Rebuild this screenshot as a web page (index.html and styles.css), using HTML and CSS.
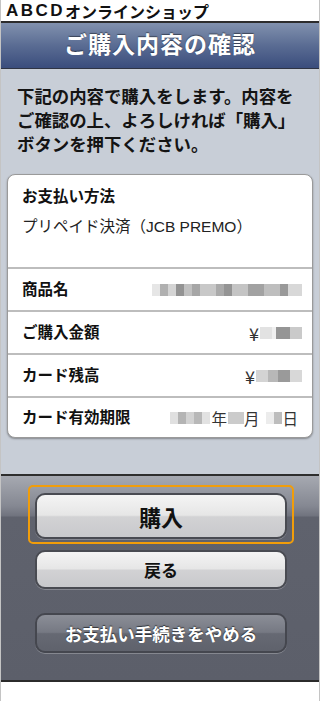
FILE: index.html
```html
<!DOCTYPE html>
<html lang="ja">
<head>
    <meta charset="UTF-8">
    <meta name="viewport" content="width=device-width, initial-scale=1.0">
    <title>ご購入内容の確認</title>
    <link rel="stylesheet" href="styles.css">
</head>
<body>
    <div id="page">
        <div class="site"><span class="abcd">ABCD</span><span class="shop">オンラインショップ</span></div>
        <h1 class="title">ご購入内容の確認</h1>

        <div class="main">
            <p class="lead">下記の内容で購入をします。内容をご確認の上、よろしければ「購入」ボタンを押下ください。</p>

            <div class="card">
                <div class="row first">
                    <div class="label">お支払い方法</div>
                    <div class="method">プリペイド決済（JCB PREMO）</div>
                </div>
                <div class="row">
                    <span class="label">商品名</span>
                    <span class="blur name"></span>
                </div>
                <div class="row">
                    <span class="label">ご購入金額</span>
                    <span class="val"><span class="yen">¥</span><span class="blur price"></span></span>
                </div>
                <div class="row">
                    <span class="label">カード残高</span>
                    <span class="val"><span class="yen">¥</span><span class="blur balance"></span></span>
                </div>
                <div class="row last">
                    <span class="label">カード有効期限</span>
                    <span class="val date"><span class="blur yy"></span>年<span class="blur mm"></span>月<span class="blur dd"></span>日</span>
                </div>
            </div>
        </div>

        <div class="actions">
            <div class="focus">
                <button class="btn big">購入</button>
            </div>
            <button class="btn back">戻る</button>
            <button class="btn dark">お支払い手続きをやめる</button>
        </div>

        <div class="foot"></div>
    </div>
</body>
</html>
```

FILE: styles.css
```css
*{
    margin: 0;
    padding: 0;
    box-sizing: border-box;
}
body{
    font-family: "Liberation Sans", "Noto Sans CJK JP", sans-serif;
    color: #111;
    background: #fff;
}
#page{
    width: 320px;
    border-left: 1px solid #c4c4c4;
    border-right: 1px solid #c4c4c4;
}

.site{
    display: flex;
    align-items: center;
    height: 23px;
    padding-left: 5px;
    font-weight: bold;
    background: #fff;
    border-bottom: 2px solid #2c2c2c;
}
.abcd{
    font-size: 17px;
    letter-spacing: 2.5px;
}
.shop{
    font-family: "Noto Sans CJK JP", sans-serif;
    font-size: 16px;
    line-height: 22px;
}
.title{
    height: 46px;
    line-height: 45px;
    text-align: center;
    color: #fff;
    font-size: 23px;
    font-weight: bold;
    letter-spacing: 1px;
    text-shadow: 0 -1px 1px rgba(0,0,0,.45);
    background: linear-gradient(#8191ae, #5a6c93 50%, #3a4d7d);
    border-bottom: 1px solid #2f3444;
}

.main{
    background: #c8ced7;
    padding: 16px 6px 36px;
}
.lead{
    margin: 0 10px;
    font-size: 17.4px;
    line-height: 24px;
    font-weight: bold;
    color: #141414;
}
.card{
    margin-top: 17px;
    background: #fff;
    border: 1px solid #9a9a9a;
    border-radius: 8px;
    box-shadow: 0 1px 2px rgba(0,0,0,.35);
    overflow: hidden;
}
.row{
    height: 43px;
    padding: 0 14px;
    border-top: 2px solid #bdbdbd;
    display: flex;
    align-items: center;
    justify-content: space-between;
    font-size: 15.5px;
}
.row.first{
    height: 92px;
    border-top: none;
    display: block;
    padding-top: 11px;
}
.row.last{
    height: 41px;
}
.label{
    font-weight: bold;
    line-height: 22px;
}
.method{
    margin-top: 8px;
    line-height: 22px;
    color: #222;
}
.val{
    display: flex;
    align-items: center;
    color: #333;
}
.yen{
    font-family: "Noto Sans CJK JP", sans-serif;
    font-size: 18px;
    line-height: 20px;
    margin-right: 1px;
}

.blur{
    display: inline-block;
    height: 12px;
    filter: blur(0.6px);
}
.name{
    width: 150px;
    margin-right: -4px;
    background: linear-gradient(90deg, #e6e6e6 0 8px, #b0b0b0 8px 16px, #d4d4d4 16px 24px, #939393 24px 32px,
        #c0c0c0 32px 40px, #a6a6a6 40px 48px, #c8c8c8 48px 64px, #aaa 64px 72px, #949494 72px 80px,
        #c4c4c4 80px 96px, #a2a2a2 96px 112px, #bebebe 112px 128px, #999 128px 136px, #d8d8d8 136px 150px);
}
.price{
    width: 42px;
    margin-right: -4px;
    background: linear-gradient(90deg, #e2e2e2 0 12px, #f0f0f0 12px 16px, #959595 16px 30px, #cacaca 30px 42px);
}
.balance{
    width: 46px;
    margin-right: -4px;
    background: linear-gradient(90deg, #d4d4d4 0 12px, #b8b8b8 12px 22px, #9a9a9a 22px 34px, #d8d8d8 34px 46px);
}
.date{
    font-size: 15.5px;
}
.yy{
    width: 40px;
    margin-right: 1px;
    background: linear-gradient(90deg, #e0e0e0 0 8px, #b4b4b4 8px 16px, #d2d2d2 16px 24px, #b8b8b8 24px 32px, #e2e2e2 32px 40px);
}
.mm{
    width: 16px;
    margin-left: 1px;
    background: #cbcbcb;
}
.dd{
    width: 16px;
    margin-left: 7px;
    background: linear-gradient(90deg, #ececec 0 8px, #bdbdbd 8px 16px);
}

.actions{
    height: 208px;
    padding: 9px 0 0 27px;
    background: linear-gradient(#a6a9b1 0, #858892 30px, #70737e 40px, #5f626d 41px, #5c5f6a);
    border-top: 2px solid #2e2e2e;
    border-bottom: 2px solid #2b2b2b;
}
.focus{
    width: 266px;
    padding: 6px 5px 3px;
    border: 2px solid #f19d0a;
    border-radius: 5px;
}
.btn{
    display: block;
    width: 252px;
    font-family: "Liberation Sans", "Noto Sans CJK JP", sans-serif;
    font-weight: bold;
    color: #111;
    border: 2px solid #494b52;
    border-radius: 10px;
    background: linear-gradient(#f4f4f4, #e6e6e6 48%, #d2d2d4 52%, #c8c9cc);
    box-shadow: 0 1px 0 rgba(255,255,255,.25);
}
.big{
    height: 46px;
    font-size: 22px;
}
.back{
    height: 39px;
    margin: 6px 0 0 7px;
    font-size: 17px;
}
.dark{
    height: 40px;
    margin: 24px 0 0 7px;
    font-size: 17.5px;
    color: #fff;
    text-shadow: 0 -1px 1px rgba(0,0,0,.6);
    border: 2px solid #45474f;
    background: linear-gradient(#8b8e97, #767983 48%, #666973 52%, #5f626c);
}
.foot{
    height: 19px;
    background: #fff;
}
```
